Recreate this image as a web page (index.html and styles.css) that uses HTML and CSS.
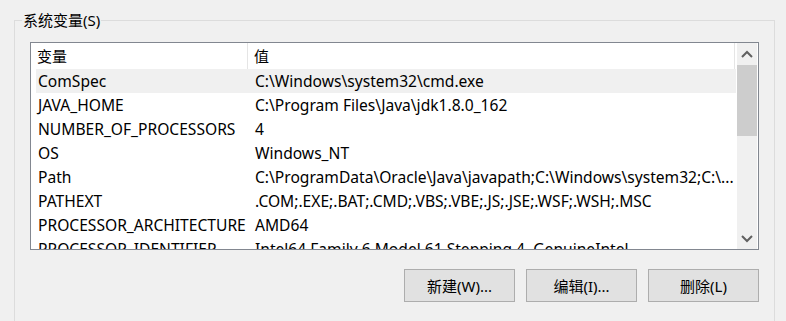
FILE: index.html
```html
<!DOCTYPE html>
<html lang="zh-CN">
<head>
<meta charset="utf-8">
<title>系统变量</title>
<link rel="stylesheet" href="styles.css">
</head>
<body>
<div class="group">
  <div class="group-title">系统变量(S)</div>
  <div class="list">
    <div class="list-content">
      <div class="header">
        <div class="hcell c1">变量</div>
        <div class="hcell c2">值</div>
      </div>
      <div class="row selected"><div class="cell c1">ComSpec</div><div class="cell c2">C:\Windows\system32\cmd.exe</div></div>
      <div class="row"><div class="cell c1">JAVA_HOME</div><div class="cell c2">C:\Program Files\Java\jdk1.8.0_162</div></div>
      <div class="row"><div class="cell c1">NUMBER_OF_PROCESSORS</div><div class="cell c2">4</div></div>
      <div class="row"><div class="cell c1">OS</div><div class="cell c2">Windows_NT</div></div>
      <div class="row"><div class="cell c1">Path</div><div class="cell c2">C:\ProgramData\Oracle\Java\javapath;C:\Windows\system32;C:\...</div></div>
      <div class="row"><div class="cell c1">PATHEXT</div><div class="cell c2">.COM;.EXE;.BAT;.CMD;.VBS;.VBE;.JS;.JSE;.WSF;.WSH;.MSC</div></div>
      <div class="row"><div class="cell c1">PROCESSOR_ARCHITECTURE</div><div class="cell c2">AMD64</div></div>
      <div class="row"><div class="cell c1">PROCESSOR_IDENTIFIER</div><div class="cell c2">Intel64 Family 6 Model 61 Stepping 4, GenuineIntel</div></div>
    </div>
    <div class="scrollbar">
      <div class="sb-btn">
        <svg width="12" height="8" viewBox="0 0 12 8"><path d="M1 7 L6 2 L11 7" fill="none" stroke="#606060" stroke-width="2"/></svg>
      </div>
      <div class="sb-thumb"></div>
      <div class="sb-track"></div>
      <div class="sb-btn">
        <svg width="12" height="8" viewBox="0 0 12 8"><path d="M1 1 L6 6 L11 1" fill="none" stroke="#606060" stroke-width="2"/></svg>
      </div>
    </div>
  </div>
  <div class="buttons">
    <button class="btn">新建(W)...</button>
    <button class="btn">编辑(I)...</button>
    <button class="btn">删除(L)</button>
  </div>
</div>
</body>
</html>
```
FILE: styles.css
```css
html, body {
  margin: 0;
  padding: 0;
  background: #f0f0f0;
  width: 786px;
  height: 321px;
  overflow: hidden;
  font-family: "Noto Sans", "Noto Sans CJK SC", sans-serif;
  font-size: 15.6px;
  color: #000;
}

.group {
  margin: 20px 0 0 14px;
  width: 759px;
  height: 300px;
  border: 1px solid #dcdcdc;
  border-bottom: none;
}

.group-title {
  width: fit-content;
  margin: -11px 0 0 7px;
  padding: 0 1px;
  height: 20px;
  line-height: 20px;
  font-size: 15px;
  background: #f0f0f0;
}

.list {
  margin: 12px 0 0 15px;
  width: 727px;
  height: 206px;
  border: 1px solid #828790;
  background: #fff;
  display: flex;
  overflow: hidden;
}

.list-content {
  width: 701px;
  padding-left: 5px;
  overflow: hidden;
}

.header {
  display: flex;
  height: 26px;
}

.hcell {
  line-height: 27px;
  white-space: nowrap;
  border-right: 1px solid #e5e5e5;
  box-sizing: border-box;
  font-size: 15px;
}

.header .c1 {
  width: 212px;
  padding-left: 1px;
}

.header .c2 {
  width: 487px;
  padding-left: 6px;
}

.row {
  display: flex;
  height: 24px;
  width: 700px;
}

.row.selected {
  background: #f0f0f0;
}

.cell {
  line-height: 25px;
  white-space: nowrap;
  overflow: hidden;
  box-sizing: border-box;
}

.row .c1 {
  width: 212px;
  padding-left: 2px;
}

.row .c2 {
  flex: 1;
  padding-left: 7px;
}

.scrollbar {
  width: 20px;
  display: flex;
  flex-direction: column;
  background: #f0f0f0;
}

.sb-btn {
  height: 21px;
  display: flex;
  align-items: center;
  justify-content: center;
}

.sb-thumb {
  height: 71px;
  margin-top: 1px;
  background: #cdcdcd;
}

.sb-track {
  flex: 1;
}

.buttons {
  display: flex;
  justify-content: flex-end;
  gap: 11px;
  width: 729px;
  margin: 19px 0 0 15px;
}

.btn {
  width: 111px;
  height: 33px;
  background: #e1e1e1;
  border: 1px solid #adadad;
  font-family: "Noto Sans", "Noto Sans CJK SC", sans-serif;
  font-size: 15px;
  color: #000;
  padding: 0;
}
```
